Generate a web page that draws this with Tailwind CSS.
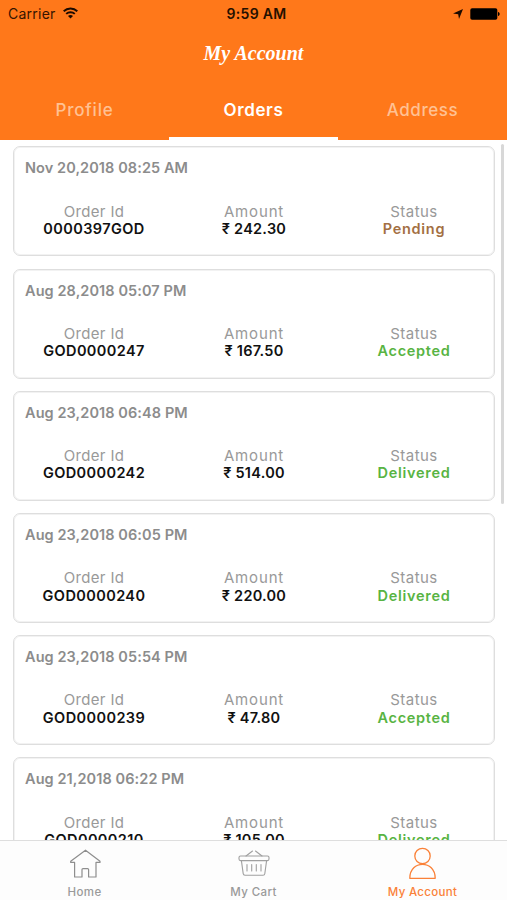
<!DOCTYPE html>
<html lang="en">
<head>
<meta charset="utf-8">
<meta name="viewport" content="width=device-width">
<title>My Account</title>
<script src="https://cdn.jsdelivr.net/npm/@tailwindcss/browser@4"></script>
</head>
<body class="bg-white">
<div class="relative flex h-[900px] w-[507px] flex-col overflow-hidden bg-white font-['Inter',sans-serif]">
  <header class="h-[140px] shrink-0 bg-[#ff781a]">
    <div class="grid h-7 grid-cols-3 items-center text-[14px] leading-7 text-[#351400]">
      <div class="flex items-center gap-[7px] pl-[8px]">
        <span class="tracking-[0.25px]">Carrier</span>
        <svg class="-mt-0.5 h-[12px] w-[15px]" viewBox="0 0 15 12" fill="none" stroke="#1c0a00" stroke-width="1.9"><path d="M.7 4.2C4.5.5 10.500.5 14.300 4.200M3.200 6.900C5.600 4.600 9.400 4.600 11.800 6.900"/><path d="M5 9C6.400 7.700 8.600 7.700 10 9L7.500 11.500Z" fill="#1c0a00" stroke="none"/></svg>
      </div>
      <div class="pl-1.5 text-center text-[14px] font-semibold tracking-[0.3px] text-[#251000]">9:59 AM</div>
      <div class="flex items-center justify-end gap-[7px] pr-[7px]">
        <svg class="h-[10px] w-[10px]" viewBox="0 0 10 10" fill="#1c0a00"><path d="M10 0 6 10 5.200 5.200 0 4.500Z"/></svg>
        <svg class="h-[12px] w-[30px]" viewBox="0 0 30 12"><rect x=".3" y=".3" width="27" height="11.400" rx="1.800" fill="#000"/><path d="M28 4c2.200.5 2.200 3.500 0 4z" fill="#000"/></svg>
      </div>
    </div>
    <h1 class="h-[52px] text-center font-['Liberation_Serif',serif] text-[20px] font-bold italic leading-[50px] tracking-[0px] text-white">My Account</h1>
    <nav class="grid h-[60px] grid-cols-3 text-center text-[17px] font-medium leading-[60px] text-[#ffc193]">
      <div class="tracking-[0.8px]">Profile</div>
      <div class="relative font-semibold tracking-[0.6px] text-white">Orders<span class="absolute inset-x-0 bottom-0 h-[3px] bg-white"></span></div>
      <div class="tracking-[0.6px]">Address</div>
    </nav>
  </header>
  <main id="orders" class="flex h-[700px] shrink-0 flex-col gap-[12.2px] overflow-hidden pl-[13px] pr-3 pt-[6.400px]"></main>
  <div class="absolute left-[501px] top-[144px] h-[360px] w-[2.500px] rounded-full bg-[#d8d8d8]"></div>
  <footer class="grid h-[60px] shrink-0 grid-cols-3 border-t border-[#dedede] bg-[#fdfdfd] text-center text-[11.5px] font-medium leading-4 text-[#9a9a9a]">
    <div class="flex flex-col items-center">
      <svg class="mt-[6px] h-[36px] w-[36px]" viewBox="0 0 36 36" fill="none" stroke="#8e8e8e" stroke-width="1.200" stroke-linejoin="round"><path d="M18.500 3.200 3.700 14.200v1.200H7.600V30h7.400v-7.400q0-1 1-1h4.600q1 0 1 1V30h7.400V15.400h4v-1.200Z"/></svg>
      <span class="pt-px tracking-[0.4px]">Home</span>
    </div>
    <div class="flex flex-col items-center">
      <svg class="mt-[6px] h-[36px] w-[36px]" viewBox="0 0 36 36" fill="none" stroke="#a0a0a0" stroke-width="1.100" stroke-linejoin="round" stroke-linecap="round"><rect x="3" y="9" width="30" height="4.600" rx="1.500"/><path d="M5.400 13.700 7.200 26.700Q7.400 28.200 9 28.200H27Q28.600 28.200 28.800 26.700L30.600 13.700M10 9 16.500 4M26 9 19.500 4M11 17.500v6.500M15.700 17.500v6.500M20.300 17.500v6.500M25 17.500v6.500"/></svg>
      <span class="pt-px tracking-[0.4px]">My Cart</span>
    </div>
    <div class="flex flex-col items-center text-[#fa8138]">
      <svg class="mt-[6px] h-[36px] w-[36px]" viewBox="0 0 36 36" fill="none" stroke="#fa8138" stroke-width="1.300" stroke-linejoin="round"><circle cx="17.500" cy="9" r="7.700"/><path d="M4.800 31.300C4.800 12.700 30.200 12.700 30.200 31.300Z"/></svg>
      <span class="pt-px tracking-[0.3px]">My Account</span>
    </div>
  </footer>
</div>
<script>
  const orders = [
    ['Nov 20,2018 08:25 AM', '0000397GOD', '242.30', 'Pending'],
    ['Aug 28,2018 05:07 PM', 'GOD0000247', '167.50', 'Accepted'],
    ['Aug 23,2018 06:48 PM', 'GOD0000242', '514.00', 'Delivered'],
    ['Aug 23,2018 06:05 PM', 'GOD0000240', '220.00', 'Delivered'],
    ['Aug 23,2018 05:54 PM', 'GOD0000239', '47.80', 'Accepted'],
    ['Aug 21,2018 06:22 PM', 'GOD0000210', '105.00', 'Delivered']
  ];
  document.getElementById('orders').innerHTML = orders.map(([date, id, amount, status]) => `
    <article class="h-[110px] w-[482px] shrink-0 rounded-[7px] border border-[#dedede] bg-white shadow-[inset_0_0_0_1px_#f2f2f2]">
      <div class="pl-[11px] pt-[11px] text-[14.500px] font-semibold leading-[20px] tracking-[0.080px] text-[#8c8c8c]">${date}</div>
      <div class="mt-[24.200px] grid grid-cols-3 text-center text-[15px] leading-[17.500px] text-[#999]">
        <div><div class="tracking-[0.350px]">Order Id</div><div class="font-semibold text-[14.500px] tracking-[0.400px] text-[#111]">${id}</div></div>
        <div><div class="tracking-[0.850px]">Amount</div><div class="font-semibold text-[14.500px] tracking-[0.250px] text-[#111]">₹ ${amount}</div></div>
        <div><div class="tracking-[0.450px]">Status</div><div class="font-semibold text-[14.500px] tracking-[0.700px] ${status === 'Pending' ? 'text-[#a36f43]' : 'text-[#58b443]'}">${status}</div></div>
      </div>
    </article>`).join('');
</script>
</body>
</html>
